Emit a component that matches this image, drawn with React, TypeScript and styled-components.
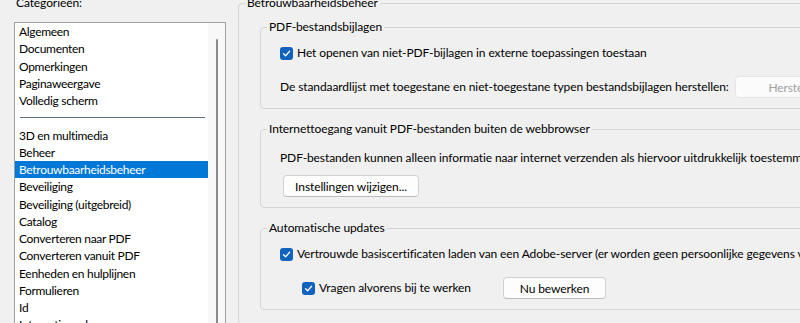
import styled, { createGlobalStyle } from "styled-components";

const GlobalStyle = createGlobalStyle`
  html, body {
    margin: 0;
    padding: 0;
    background: #f0f0f0;
    overflow: hidden;
  }
  body {
    font-family: Lato, "Noto Sans", sans-serif;
    font-size: 12px;
    letter-spacing: -0.1px;
    color: #000;
  }
`;

const Page = styled.div`
  display: flex;
  gap: 12px;
  padding-left: 14px;
  margin-top: -5px;
  width: 800px;
  height: 330px;
`;

const Sidebar = styled.div`
  width: 212px;
  flex-shrink: 0;
  display: flex;
  flex-direction: column;
`;

const SideLabel = styled.div`
  line-height: 16px;
  padding-left: 2px;
`;

const ListBox = styled.div`
  margin-top: 11px;
  border: 1px solid #a0a0a0;
  background: #fff;
  display: flex;
  height: 320px;
`;

const Items = styled.ul`
  list-style: none;
  margin: 0;
  padding: 0;
  width: 193px;
  letter-spacing: -0.3px;
`;

const Item = styled.li<{ $selected?: boolean }>`
  height: 17.25px;
  line-height: 17.25px;
  padding-left: 4px;
  white-space: nowrap;
  overflow: hidden;
  background: ${(p) => (p.$selected ? "#0078d7" : "transparent")};
  color: ${(p) => (p.$selected ? "#fff" : "#000")};
`;

const Separator = styled.li`
  height: 17.25px;
  display: flex;
  align-items: center;
  padding: 0 3px 0 5px;
  &::after {
    content: "";
    flex: 1;
    height: 1px;
    background: #5b7383;
  }
`;

const ScrollTrack = styled.div`
  width: 17px;
  background: #f8f8f8;
  padding: 16px 0 0 8px;
  box-sizing: border-box;
`;

const ScrollThumb = styled.div`
  width: 2px;
  height: 100%;
  background: #8a8a8a;
  border-radius: 1px;
`;

const Group = styled.fieldset<{ $width: number }>`
  margin: 0;
  padding: 0;
  min-width: 0;
  width: ${(p) => p.$width}px;
  border: 1px solid #d5d5d5;
  border-radius: 4px;
  flex-shrink: 0;
`;

const Legend = styled.legend`
  margin-left: 6px;
  padding: 0 2px;
  line-height: 16px;
  font-size: 12px;
  white-space: nowrap;
`;

const OuterBody = styled.div`
  padding: 8px 0 0 21px;
  display: flex;
  flex-direction: column;
  gap: 12px;
`;

const GroupBody = styled.div<{ $top?: number; $gap?: number }>`
  padding: ${(p) => p.$top ?? 10}px 0 10px 19px;
  display: flex;
  flex-direction: column;
  gap: ${(p) => p.$gap ?? 15}px;
`;

const Row = styled.div<{ $indent?: number }>`
  display: flex;
  align-items: center;
  min-height: 16px;
  margin-left: ${(p) => p.$indent ?? 0}px;
  white-space: nowrap;
`;

const TextCell = styled.span<{ $width?: number }>`
  display: inline-block;
  width: ${(p) => (p.$width ? `${p.$width}px` : "auto")};
  line-height: 16px;
  flex-shrink: 0;
`;

const CheckLabel = styled.label<{ $width?: number }>`
  display: flex;
  align-items: center;
  gap: 4px;
  width: ${(p) => (p.$width ? `${p.$width}px` : "auto")};
  flex-shrink: 0;
  line-height: 16px;
`;

const CheckBox = styled.span`
  width: 13px;
  height: 13px;
  border-radius: 3px;
  background: #0f62be;
  display: flex;
  align-items: center;
  justify-content: center;
  flex-shrink: 0;
`;

const Button = styled.button<{ $width: number; $offset?: number }>`
  height: 22px;
  width: ${(p) => p.$width}px;
  margin-left: ${(p) => p.$offset ?? 0}px;
  flex-shrink: 0;
  padding: 0;
  font: inherit;
  letter-spacing: inherit;
  color: ${(p) => (p.disabled ? "#a0a0a0" : "#000")};
  background: ${(p) => (p.disabled ? "#fbfbfb" : "#fdfdfd")};
  border: 1px solid ${(p) => (p.disabled ? "#e5e5e5" : "#d0d0d0")};
  border-bottom-color: ${(p) => (p.disabled ? "#e5e5e5" : "#bcbcbc")};
  border-radius: 4px;
`;

function Check({ label, width }: { label: string; width?: number }) {
  return (
    <CheckLabel $width={width}>
      <CheckBox>
        <svg width="9" height="9" viewBox="0 0 9 9">
          <polyline points="1.5,4.8 3.6,6.8 7.6,2.2" fill="none" stroke="#fff" strokeWidth="1.3" strokeLinecap="round" strokeLinejoin="round" />
        </svg>
      </CheckBox>
      {label}
    </CheckLabel>
  );
}

const topItems = ["Algemeen", "Documenten", "Opmerkingen", "Paginaweergave", "Volledig scherm"];
const otherItems = [
  "3D en multimedia",
  "Beheer",
  "Betrouwbaarheidsbeheer",
  "Beveiliging",
  "Beveiliging (uitgebreid)",
  "Catalog",
  "Converteren naar PDF",
  "Converteren vanuit PDF",
  "Eenheden en hulplijnen",
  "Formulieren",
  "Id",
  "Internationaal",
];

export default function App() {
  return (
    <>
      <GlobalStyle />
      <Page>
        <Sidebar>
          <SideLabel>Categorieën:</SideLabel>
          <ListBox>
            <Items>
              {topItems.map((t) => (
                <Item key={t}>{t}</Item>
              ))}
              <Separator />
              {otherItems.map((t) => (
                <Item key={t} $selected={t === "Betrouwbaarheidsbeheer"}>
                  {t}
                </Item>
              ))}
            </Items>
            <ScrollTrack>
              <ScrollThumb />
            </ScrollTrack>
          </ListBox>
        </Sidebar>

        <Group $width={640}>
          <Legend>Betrouwbaarheidsbeheer</Legend>
          <OuterBody>
            <Group $width={600}>
              <Legend>PDF-bestandsbijlagen</Legend>
              <GroupBody>
                <Row>
                  <Check label="Het openen van niet-PDF-bijlagen in externe toepassingen toestaan" />
                </Row>
                <Row>
                  <TextCell $width={455}>
                    De standaardlijst met toegestane en niet-toegestane typen bestandsbijlagen herstellen:
                  </TextCell>
                  <Button $width={120} disabled>
                    Herstellen
                  </Button>
                </Row>
              </GroupBody>
            </Group>

            <Group $width={600}>
              <Legend>Internettoegang vanuit PDF-bestanden buiten de webbrowser</Legend>
              <GroupBody $top={12} $gap={10}>
                <Row>
                  PDF-bestanden kunnen alleen informatie naar internet verzenden als hiervoor uitdrukkelijk toestemming is gegeven.
                </Row>
                <Row>
                  <Button $width={136} $offset={3}>
                    Instellingen wijzigen...
                  </Button>
                </Row>
              </GroupBody>
            </Group>

            <Group $width={600}>
              <Legend>Automatische updates</Legend>
              <GroupBody>
                <Row>
                  <Check label="Vertrouwde basiscertificaten laden van een Adobe-server (er worden geen persoonlijke gegevens verzonden)" />
                </Row>
                <Row $indent={22}>
                  <Check label="Vragen alvorens bij te werken" width={201} />
                  <Button $width={103}>Nu bewerken</Button>
                </Row>
              </GroupBody>
            </Group>
          </OuterBody>
        </Group>
      </Page>
    </>
  );
}
